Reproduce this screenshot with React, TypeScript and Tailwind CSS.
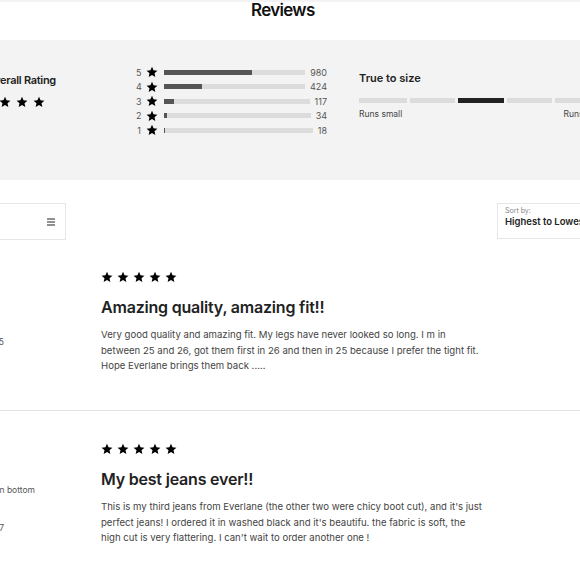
import React from 'react';

const Star = ({ className = 'w-3 h-3' }: { className?: string }) => (
  <svg viewBox="0 0 24 24" className={className} fill="currentColor">
    <path d="M12 1.5l3.1 7.1 7.7.7-5.8 5.1 1.7 7.6L12 18l-6.7 4 1.7-7.6L1.2 9.3l7.7-.7z" />
  </svg>
);

const breakdown = [
  { stars: 5, count: 980, pct: 62 },
  { stars: 4, count: 424, pct: 27 },
  { stars: 3, count: 117, pct: 7 },
  { stars: 2, count: 34, pct: 2 },
  { stars: 1, count: 18, pct: 1 },
];

// meta lines sit in a left column that runs off the page edge
const reviews = [
  {
    metaTop: 'pt-[65px]',
    meta: [{ text: 'Size Purchased: 25', cls: 'w-[204px]' }],
    title: 'Amazing quality, amazing fit!!',
    body: [
      'Very good quality and amazing fit. My legs have never looked so long. I m in',
      'between 25 and 26, got them first in 26 and then in 25 because I prefer the tight fit.',
      'Hope Everlane brings them back .....',
    ],
  },
  {
    metaTop: 'pt-[41px]',
    meta: [
      { text: 'Slightly tight on bottom', cls: 'w-[235px]' },
      { text: 'Usual size: 27', cls: 'w-[204px] mt-[25px]' },
    ],
    title: 'My best jeans ever!!',
    body: [
      "This is my third jeans from Everlane (the other two were chicy boot cut), and it's just",
      "perfect jeans! I ordered it in washed black and it's beautifu. the fabric is soft, the",
      "high cut is very flattering. I can't wait to order another one !",
    ],
  },
];

export default function App() {
  return (
    <div className="w-[580px] h-[580px] overflow-hidden bg-white font-['Inter',sans-serif] text-[#222]">
      {/* header */}
      <div className="h-[40px] border-t-2 border-[#f3f3f3] flex">
        <h2 className="ml-[251px] mt-[-4px] text-[17px] font-semibold tracking-[-0.7px] text-[#111]">Reviews</h2>
      </div>

      {/* summary panel */}
      <div className="h-[140px] bg-[#f3f3f3] flex items-start">
        <div className="ml-[-14px] w-[150px] pt-[32px] shrink-0">
          <p className="text-[11px] font-semibold tracking-[-0.3px] text-[#222] whitespace-nowrap">Overall Rating</p>
          <div className="flex gap-[5px] mt-[7px] ml-[-4px] text-black">
            {[0, 1, 2, 3].map((i) => (
              <Star key={i} className="w-[12px] h-[12px]" />
            ))}
          </div>
        </div>

        <div className="w-[191px] pt-[25px] shrink-0">
          {breakdown.map((r) => (
            <div key={r.stars} className="h-[14.5px] flex items-center text-[9px] text-[#555]">
              <span className="w-[5px] text-right">{r.stars}</span>
              <Star className="w-[12px] h-[12px] text-black ml-[5px]" />
              <div className="flex-1 h-[5px] bg-[#dcdcdc] ml-[6px]">
                <div className="h-full bg-[#555]" style={{ width: `${r.pct}%` }} />
              </div>
              <span className="ml-[5px]">{r.count}</span>
            </div>
          ))}
        </div>

        <div className="ml-[32px] pt-[30px] shrink-0">
          <p className="text-[11px] font-semibold text-[#222]">True to size</p>
          <div className="flex gap-[3px] mt-[11px]">
            <div className="w-[48px] h-[5px] bg-[#dcdcdc]" />
            <div className="w-[45px] h-[5px] bg-[#dcdcdc]" />
            <div className="w-[46px] h-[5px] bg-[#222]" />
            <div className="w-[45px] h-[5px] bg-[#dcdcdc]" />
            <div className="w-[45px] h-[5px] bg-[#dcdcdc]" />
          </div>
          <div className="flex justify-between w-[247px] mt-[5px] text-[8.5px] text-[#444]">
            <span>Runs small</span>
            <span>Runs large</span>
          </div>
        </div>
      </div>

      {/* filter row */}
      <div className="flex justify-between items-start mt-[23px]">
        <div className="ml-[-40px] w-[106px] h-[37px] border border-[#e6e6e6] flex items-center justify-end pr-[10px]">
          <svg viewBox="0 0 8 8" className="w-[8px] h-[8px]" stroke="#222" strokeWidth="1.2">
            <path d="M0 1h8M0 4h8M0 7h8" />
          </svg>
        </div>
        <div className="mr-[-20px] w-[103px] h-[36px] border border-[#e6e6e6] pl-[7px] pt-[2px]">
          <p className="text-[7px] text-[#888] leading-[9px]">Sort by:</p>
          <p className="text-[9.5px] font-semibold text-[#222] leading-[13px] whitespace-nowrap">Highest to Lowest</p>
        </div>
      </div>

      {/* reviews */}
      {reviews.map((rv, idx) => (
        <div key={idx} className={`flex ${idx === 0 ? 'pt-[31px] h-[171px] border-b border-[#e3e3e3]' : 'pt-[32px]'}`}>
          <div className={`ml-[-200px] w-[301px] shrink-0 text-[8.5px] text-[#555] ${rv.metaTop}`}>
            {rv.meta.map((m, i) => (
              <p key={i} className={`whitespace-nowrap text-right ${m.cls}`}>{m.text}</p>
            ))}
          </div>
          <div className="w-[420px]">
            <div className="flex gap-[4px] text-black">
              {[0, 1, 2, 3, 4].map((i) => (
                <Star key={i} className="w-[12px] h-[12px]" />
              ))}
            </div>
            <h3 className="mt-[12px] text-[16px] font-semibold tracking-[-0.2px] text-[#222]">{rv.title}</h3>
            <p className="mt-[8px] text-[9.6px] leading-[15.5px] text-[#444]">
              {rv.body.map((line, i) => (
                <span key={i} className="block whitespace-nowrap">{line}</span>
              ))}
            </p>
          </div>
        </div>
      ))}
    </div>
  );
}
